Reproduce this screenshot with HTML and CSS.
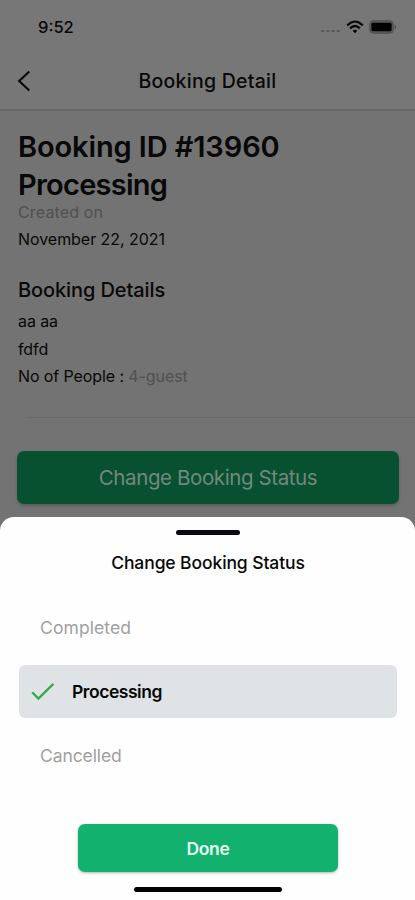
FILE: index.html
```html
<!DOCTYPE html>
<html lang="en">
<head>
<meta charset="utf-8">
<meta name="viewport" content="width=device-width, initial-scale=1">
<title>Booking Detail</title>
<link rel="stylesheet" href="styles.css">
</head>
<body>
<div class="phone">
  <div class="top">
    <div class="status">
      <span class="time">9:52</span>
      <div class="indicators">
        <svg class="dots" width="20" height="4" viewBox="0 0 20 4"><g fill="#585858"><rect x="0" y="1" width="3.4" height="2" rx="1"/><rect x="5.2" y="1" width="3.4" height="2" rx="1"/><rect x="10.4" y="1" width="3.4" height="2" rx="1"/><rect x="15.6" y="1" width="3.4" height="2" rx="1"/></g></svg>
        <svg class="wifi" width="18" height="14" viewBox="0 0 18 14"><g fill="none" stroke="#080808" stroke-width="2.2"><path d="M1.2 5.4Q9-2.4 16.8 5.4"/><path d="M4.1 8.4Q9 3.6 13.9 8.4"/></g><path d="M6.6 10.8Q9 8.6 11.4 10.8L9 13.2Z" fill="#080808"/></svg>
        <svg class="battery" width="28" height="14" viewBox="0 0 28 14"><rect x=".7" y=".7" width="23.6" height="12.6" rx="3.6" fill="#5a5a5a" stroke="#505050"/><rect x="2.4" y="2.8" width="20.2" height="8.4" rx="1.4" fill="#000"/><path d="M25.6 4.6Q28.6 7 25.6 9.4Z" fill="#484848"/></svg>
      </div>
    </div>
    <div class="nav">
      <svg class="back" width="14" height="22" viewBox="0 0 14 22"><path d="M12.3 1.6L2.2 11l10.1 9.4" fill="none" stroke="#080808" stroke-width="2.1"/></svg>
      <h1 class="nav-title">Booking Detail</h1>
    </div>
  </div>
  <div class="content">
    <h2 class="headline"><span class="h-id">Booking ID #13960</span><br><span class="h-state">Processing</span></h2>
    <p class="created">Created on</p>
    <p class="date">November 22, 2021</p>
    <h3 class="section">Booking Details</h3>
    <p class="line name">aa aa</p>
    <p class="line note">fdfd</p>
    <p class="line people">No of People : <span class="guests">4-guest</span></p>
    <div class="divider"></div>
    <div class="change"><span>Change Booking Status</span></div>
  </div>
  <div class="sheet">
    <div class="handle"></div>
    <h2 class="sheet-title">Change Booking Status</h2>
    <div class="option"><span class="completed">Completed</span></div>
    <div class="option selected">
      <svg class="check" width="24" height="18" viewBox="0 0 24 18"><path d="M1.2 9.2L7.4 15.6L22.4 .9" fill="none" stroke="#35ab48" stroke-width="2.3"/></svg>
      <span class="processing">Processing</span>
    </div>
    <div class="option"><span class="cancelled">Cancelled</span></div>
    <div class="done"><span>Done</span></div>
    <div class="home"></div>
  </div>
</div>
</body>
</html>
```
FILE: styles.css
```css
* { box-sizing: border-box; }
body { margin: 0; font-family: Inter, "Liberation Sans", sans-serif; }
h1, h2, h3, p { margin: 0; white-space: nowrap; }
svg { display: block; flex: none; }

.phone {
  width: 415px;
  height: 900px;
  overflow: hidden;
  display: flex;
  flex-direction: column;
  background: #737373;
  color: #080808;
}

.top { height: 111px; flex: none; background: #777; border-bottom: 2px solid #676767; }
.status {
  height: 54px;
  padding: 0 18px 0 38px;
  display: flex;
  align-items: center;
  justify-content: space-between;
}
.time { font-size: 16.5px; font-weight: 500; letter-spacing: 0; }
.indicators { display: flex; align-items: center; }
.dots { margin: 8px 5px 0 0; }
.wifi { margin-right: 5px; }

.nav { height: 54px; padding-left: 17px; display: flex; align-items: center; }
.nav-title { margin-left: 107.5px; font-size: 19.5px; font-weight: 500; line-height: 24px; letter-spacing: 0.25px; }

.content { height: 406px; flex: none; padding: 17px 16px 0 18px; }
.headline { font-size: 29px; font-weight: 600; line-height: 37.5px; }
.h-id { letter-spacing: -0.12px; }
.h-state { letter-spacing: -0.75px; }
.created { font-size: 16px; line-height: 24px; margin-top: -3px; letter-spacing: 0.15px; color: #505050; }
.date { font-size: 16px; line-height: 24px; margin-top: 3px; letter-spacing: -0.05px; }
.section { font-size: 20px; font-weight: 500; line-height: 28px; margin-top: 25px; letter-spacing: -0.1px; }
.line { font-size: 16px; line-height: 27.5px; letter-spacing: -0.1px; }
.name { margin-top: 4px; }
.guests { color: #505050; }
.divider { height: 1px; margin: 26.5px -16px 0 9px; background: #696969; }
.change {
  height: 53px;
  margin: 33px 0 0 -1px;
  display: flex;
  align-items: center;
  justify-content: center;
  border-radius: 7px;
  background: #075131;
  color: #73887d;
  font-size: 20.5px;
  letter-spacing: -0.4px;
  white-space: nowrap;
  box-shadow: 0 2px 3px #5c5c5c;
}

.sheet {
  height: 383px;
  flex: none;
  padding: 13px 18px 0 19px;
  border-radius: 14px 14px 0 0;
  background: #fefefe;
}
.handle { width: 64px; height: 5px; margin: 0 auto; border-radius: 3px; background: #080b0e; }
.sheet-title { margin-top: 16px; font-size: 17.5px; font-weight: 500; line-height: 24px; letter-spacing: -0.1px; text-align: center; }
.option {
  height: 53px;
  margin-bottom: 11px;
  padding-left: 21px;
  display: flex;
  align-items: center;
  border-radius: 6px;
  color: #a0a0a0;
  font-size: 17.5px;
}
.completed { letter-spacing: 0.1px; }
.cancelled { letter-spacing: -0.1px; }
.sheet-title + .option { margin-top: 26px; }
.selected { padding-left: 12px; background: #dfe3e6; color: #080808; font-weight: 600; letter-spacing: -0.45px; }
.check { margin-right: 17px; }
.done {
  width: 260px;
  height: 48px;
  margin: 42px auto 0;
  display: flex;
  align-items: center;
  justify-content: center;
  border-radius: 7px;
  background: #12b16e;
  color: #e6fff3;
  font-size: 17.5px;
  font-weight: 600;
  letter-spacing: -0.35px;
  box-shadow: 0 1px 3px #a9b9b1;
}
.home { width: 148px; height: 5px; margin: 15px auto 0; border-radius: 3px; background: #000; }
```
